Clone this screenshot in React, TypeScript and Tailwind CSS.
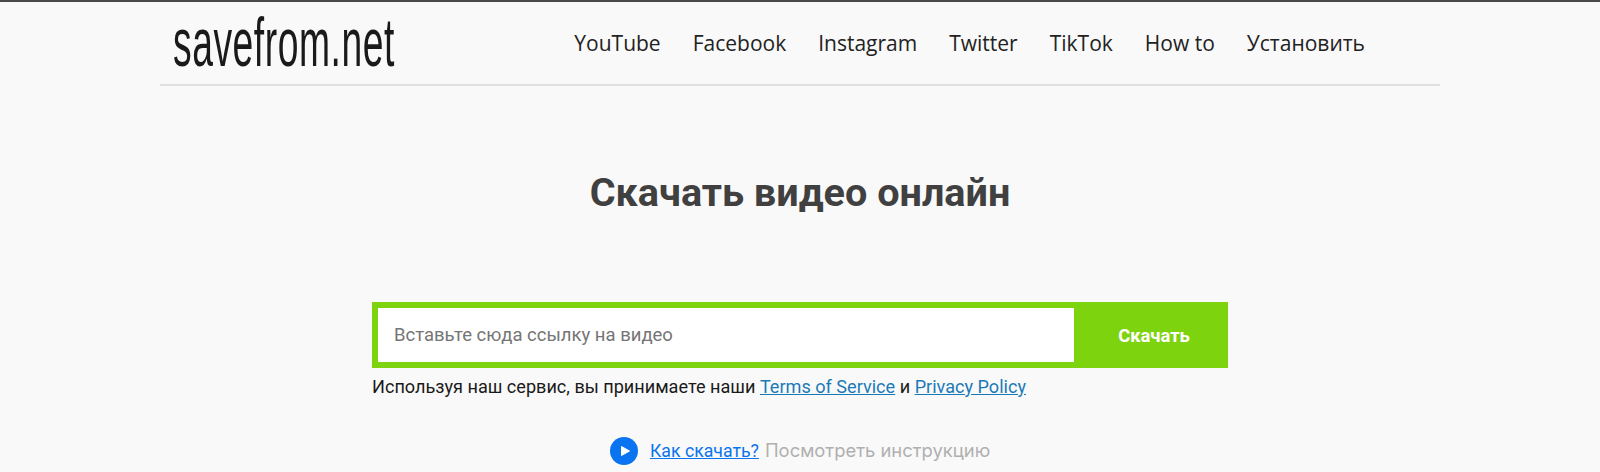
const navItems = ["YouTube", "Facebook", "Instagram", "Twitter", "TikTok", "How to", "Установить"];

const App = () => {
  return (
    <div className="h-[472px] overflow-hidden border-t-2 border-[#4a4a4a] bg-[#f9f9f9] font-['Roboto',sans-serif]">
      <div className="mx-auto w-[1280px]">
        <header className="flex h-[84px] items-center justify-between border-b-2 border-[#e0e0e0] pl-[13px] pr-[75px]">
          <div className="h-[60px] w-[222px]">
            <span className="block origin-left scale-x-[0.54] whitespace-nowrap font-['Liberation_Sans',sans-serif] text-[69px] leading-[60px] tracking-[1px] text-[#1a1a1a]">
              savefrom.net
            </span>
          </div>
          <nav className="mt-[2px] flex gap-[32px] font-['Open_Sans',sans-serif] text-[21px] text-[#222222]">
            {navItems.map((item) => (
              <span key={item}>{item}</span>
            ))}
          </nav>
        </header>
        <h1 className="mt-[82px] text-center text-[39.6px] font-bold leading-[50px] text-[#404040]">
          Скачать видео онлайн
        </h1>
        <div className="ml-[212px] mt-[84px] w-[856px]">
          <div className="flex h-[66px] bg-[#7ed30f] p-[6px] pr-0">
            <div className="flex h-full w-[696px] items-center bg-white pl-[16px] pt-[2px] text-[18.5px] text-[#757575]">
              Вставьте сюда ссылку на видео
            </div>
            <div className="flex flex-1 items-center justify-center pl-[6px] pt-[2px] text-[18.4px] font-bold text-white">
              Скачать
            </div>
          </div>
          <p className="mt-[8px] text-[18.1px] leading-[22px] text-[#1a1a1a]">
            Используя наш сервис, вы принимаете наши <a className="text-[#1a7ab8] underline">Terms of Service</a> и{" "}
            <a className="text-[#1a7ab8] underline">Privacy Policy</a>
          </p>
        </div>
        <div className="mt-[39px] flex items-center pl-[450px] text-[17.7px]">
          <svg width="28" height="28" viewBox="0 0 28 28" className="mr-[12px]">
            <circle cx="14" cy="14" r="14" fill="#0a74f0" />
            <path d="M11.5 9.5 L19.5 14 L11.5 18.5 Z" fill="#fff" stroke="#fff" strokeLinejoin="round" />
          </svg>
          <a className="text-[#0a74f0] underline">Как скачать?</a>
          <span className="ml-[6px] font-['Inter',sans-serif] text-[18.4px] text-[#b0b0b0]">Посмотреть инструкцию</span>
        </div>
      </div>
    </div>
  );
};

export default App;
